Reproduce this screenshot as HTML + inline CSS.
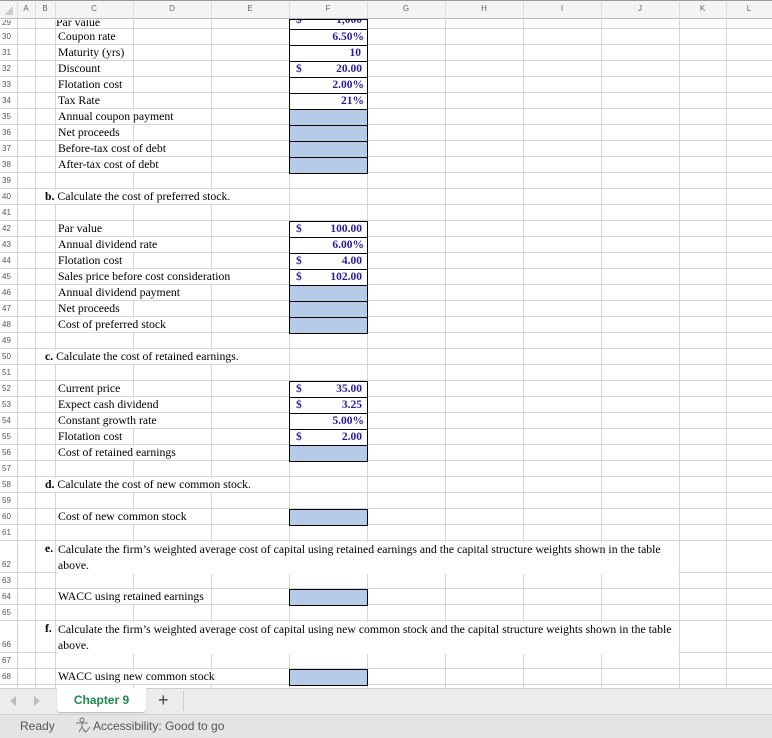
<!DOCTYPE html>
<html><head><meta charset="utf-8">
<style>
*{margin:0;padding:0;box-sizing:border-box}
body{width:772px;height:738px;overflow:hidden;background:#fff;position:relative;font-family:"Liberation Serif",serif;font-size:11.75px;color:#000}
.a{position:absolute}
.hl{position:absolute;height:1px;background:#d6d6d6}
.vl{position:absolute;width:1px;background:#d6d6d6}
.rn{position:absolute;left:0;width:17px;font:8px "Liberation Sans",sans-serif;color:#555;padding-left:2px}
.t{position:absolute;white-space:nowrap;background:#fff;line-height:14px}
.box{position:absolute;left:289px;width:79px;border:1px solid #000;background:#fff}
.blue{background:#b6cbe7}
.n{position:absolute;font-weight:bold;color:#2b1b9c;font-size:11.5px;line-height:14px}
.ch{position:absolute;top:4px;font:8px "Liberation Sans",sans-serif;color:#666;text-align:center}
</style></head><body>
<div id="g"></div>
<script>
var g=document.getElementById('g'),h='';
var vx=[17,35,55,133,211,289,367,445,523,601,679,726];
var cols=['A','B','C','D','E','F','G','H','I','J','K','L'];
function rtop(n){if(n<=61)return 29+(n-30)*16;if(n==62)return 541;if(n<=65)return 573+(n-63)*16;if(n==66)return 621;return 653+(n-67)*16;}
function rht(n){return (n==62||n==66)?32:16;}
h+='<div class="a" style="left:0;top:0;width:772px;height:19px;background:#f4f4f4;border-bottom:1px solid #bbb"></div>';
h+='<div class="a" style="left:0;top:0;width:772px;height:1px;background:#999"></div>';
for(var i=0;i<vx.length;i++){var x=vx[i],nx=vx[i+1]||772;h+='<div class="a" style="left:'+x+'px;top:2px;width:1px;height:16px;background:#ddd"></div><div class="ch" style="left:'+x+'px;width:'+(nx-x)+'px">'+cols[i]+'</div>';}
h+='<div class="a" style="left:4px;top:6px;width:0;height:0;border-left:9px solid transparent;border-bottom:9px solid #ccc"></div>';
for(var i=0;i<vx.length;i++)h+='<div class="vl" style="left:'+vx[i]+'px;top:20px;height:668px"></div>';
for(var n=30;n<=69;n++){var y=rtop(n);h+='<div class="hl" style="left:0;top:'+(y-1)+'px;width:772px"></div>';}
h+='<div class="rn" style="top:20px;height:9px;line-height:6px;overflow:hidden">29</div>';
for(var n=30;n<=68;n++){var y=rtop(n);h+='<div class="rn" style="top:'+(y+rht(n)-14)+'px;line-height:12px">'+n+'</div>';}
g.innerHTML=h;
</script>
<div class="a" style="left:17px;top:19px;width:1px;height:669px;background:#ccc"></div>

<div class="t" style="left:56px;top:20px;height:8px;overflow:hidden;line-height:6px;width:76px">Par value</div>
<div class="t" style="left:58px;top:30px">Coupon rate</div>
<div class="t" style="left:58px;top:46px">Maturity (yrs)</div>
<div class="t" style="left:58px;top:62px">Discount</div>
<div class="t" style="left:58px;top:78px">Flotation cost</div>
<div class="t" style="left:58px;top:94px">Tax Rate</div>
<div class="t" style="left:58px;top:110px">Annual coupon payment</div>
<div class="t" style="left:58px;top:126px">Net proceeds</div>
<div class="t" style="left:58px;top:142px">Before-tax cost of debt</div>
<div class="t" style="left:58px;top:158px">After-tax cost of debt</div>
<div class="t" style="left:45px;top:190px"><b>b.</b> Calculate the cost of preferred stock.</div>
<div class="t" style="left:58px;top:222px">Par value</div>
<div class="t" style="left:58px;top:238px">Annual dividend rate</div>
<div class="t" style="left:58px;top:254px">Flotation cost</div>
<div class="t" style="left:58px;top:270px">Sales price before cost consideration</div>
<div class="t" style="left:58px;top:286px">Annual dividend payment</div>
<div class="t" style="left:58px;top:302px">Net proceeds</div>
<div class="t" style="left:58px;top:318px">Cost of preferred stock</div>
<div class="t" style="left:45px;top:350px"><b>c.</b> Calculate the cost of retained earnings.</div>
<div class="t" style="left:58px;top:382px">Current price</div>
<div class="t" style="left:58px;top:398px">Expect cash dividend</div>
<div class="t" style="left:58px;top:414px">Constant growth rate</div>
<div class="t" style="left:58px;top:430px">Flotation cost</div>
<div class="t" style="left:58px;top:446px">Cost of retained earnings</div>
<div class="t" style="left:45px;top:478px"><b>d.</b> Calculate the cost of new common stock.</div>
<div class="t" style="left:58px;top:510px">Cost of new common stock</div>
<div class="t" style="left:45px;top:542px;width:9px"><b>e.</b></div>
<div class="t" style="left:58px;top:542px;width:620px;white-space:normal;line-height:16px">Calculate the firm’s weighted average cost of capital using retained earnings and the capital structure weights shown in the table above.</div>
<div class="t" style="left:58px;top:590px">WACC using retained earnings</div>
<div class="t" style="left:45px;top:622px;width:9px"><b>f.</b></div>
<div class="t" style="left:58px;top:622px;width:620px;white-space:normal;line-height:16px">Calculate the firm’s weighted average cost of capital using new common stock and the capital structure weights shown in the table above.</div>
<div class="t" style="left:58px;top:670px">WACC using new common stock</div>

<div class="box" style="top:19px;height:11px"></div>
<div class="a" style="left:290px;top:20px;width:77px;height:9px;overflow:hidden">
<div class="n" style="left:6px;top:-7px">$</div><div class="n" style="left:10px;width:62px;text-align:right;top:-7px">1,000</div></div>
<div class="box" style="top:29px;height:17px"></div><div class="n" style="left:300px;width:64px;text-align:right;top:30px">6.50%</div>
<div class="box" style="top:45px;height:17px"></div><div class="n" style="left:300px;width:61px;text-align:right;top:46px">10</div>
<div class="box" style="top:61px;height:17px"></div><div class="n" style="left:296px;top:62px">$</div><div class="n" style="left:300px;width:62px;text-align:right;top:62px">20.00</div>
<div class="box" style="top:77px;height:17px"></div><div class="n" style="left:300px;width:64px;text-align:right;top:78px">2.00%</div>
<div class="box" style="top:93px;height:17px"></div><div class="n" style="left:300px;width:64px;text-align:right;top:94px">21%</div>
<div class="box blue" style="top:109px;height:17px"></div>
<div class="box blue" style="top:125px;height:17px"></div>
<div class="box blue" style="top:141px;height:17px"></div>
<div class="box blue" style="top:157px;height:17px"></div>

<div class="box" style="top:221px;height:17px"></div><div class="n" style="left:296px;top:222px">$</div><div class="n" style="left:300px;width:62px;text-align:right;top:222px">100.00</div>
<div class="box" style="top:237px;height:17px"></div><div class="n" style="left:300px;width:64px;text-align:right;top:238px">6.00%</div>
<div class="box" style="top:253px;height:17px"></div><div class="n" style="left:296px;top:254px">$</div><div class="n" style="left:300px;width:62px;text-align:right;top:254px">4.00</div>
<div class="box" style="top:269px;height:17px"></div><div class="n" style="left:296px;top:270px">$</div><div class="n" style="left:300px;width:62px;text-align:right;top:270px">102.00</div>
<div class="box blue" style="top:285px;height:17px"></div>
<div class="box blue" style="top:301px;height:17px"></div>
<div class="box blue" style="top:317px;height:17px"></div>

<div class="box" style="top:381px;height:17px"></div><div class="n" style="left:296px;top:382px">$</div><div class="n" style="left:300px;width:62px;text-align:right;top:382px">35.00</div>
<div class="box" style="top:397px;height:17px"></div><div class="n" style="left:296px;top:398px">$</div><div class="n" style="left:300px;width:62px;text-align:right;top:398px">3.25</div>
<div class="box" style="top:413px;height:17px"></div><div class="n" style="left:300px;width:64px;text-align:right;top:414px">5.00%</div>
<div class="box" style="top:429px;height:17px"></div><div class="n" style="left:296px;top:430px">$</div><div class="n" style="left:300px;width:62px;text-align:right;top:430px">2.00</div>
<div class="box blue" style="top:445px;height:17px"></div>
<div class="box blue" style="top:509px;height:17px"></div>
<div class="box blue" style="top:589px;height:17px"></div>
<div class="box blue" style="top:669px;height:17px"></div>

<div class="a" style="left:0;top:688px;width:772px;height:26px;background:#ececec;border-top:1px solid #ccc"></div>
<div class="a" style="left:10px;top:696px;width:0;height:0;border-top:5px solid transparent;border-bottom:5px solid transparent;border-right:6px solid #bbb"></div>
<div class="a" style="left:34px;top:696px;width:0;height:0;border-top:5px solid transparent;border-bottom:5px solid transparent;border-left:6px solid #bbb"></div>
<div class="a" style="left:57px;top:688px;width:89px;height:24px;background:#fff;border-radius:0 0 3px 3px;box-shadow:0 1px 1px #bbb;font:bold 12px 'Liberation Sans',sans-serif;color:#1e8a4c;text-align:center;line-height:24px">Chapter 9</div>
<div class="a" style="left:158px;top:690px;font:18px 'Liberation Sans',sans-serif;color:#444">+</div>
<div class="a" style="left:183px;top:691px;width:1px;height:20px;background:#ccc"></div>
<div class="a" style="left:0;top:714px;width:772px;height:24px;background:#e4e4e4;border-top:1px solid #d0d0d0"></div>
<div class="a" style="left:20px;top:719px;font:12px 'Liberation Sans',sans-serif;color:#555">Ready</div>
<svg class="a" style="left:74px;top:717px" width="17" height="17" viewBox="0 0 17 17" fill="none" stroke="#777" stroke-width="1"><circle cx="8" cy="3" r="2"/><path d="M2 6h12M8 5v5M5 15l3-5 3 5M10 13l2 2 4-5"/></svg>
<div class="a" style="left:93px;top:719px;font:12px 'Liberation Sans',sans-serif;color:#555">Accessibility: Good to go</div>
</body></html>
